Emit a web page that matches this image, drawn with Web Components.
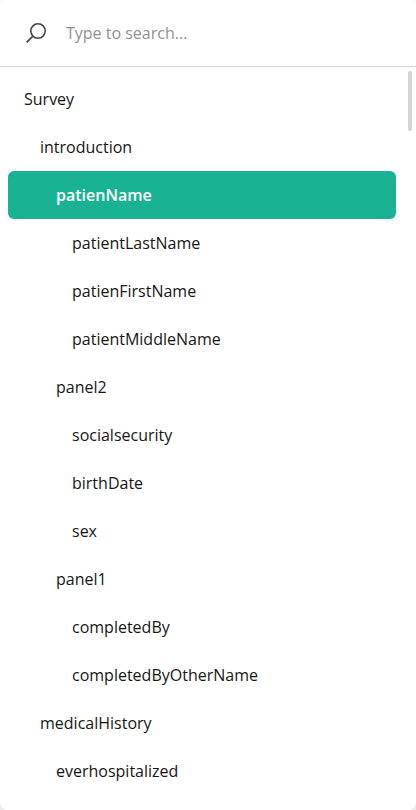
<!DOCTYPE html>
<html lang="en"><head><meta charset="utf-8"><title>Survey outline</title>
<style>html,body{margin:0;height:100%;overflow:hidden}body{background:linear-gradient(#f9f9f9,#ededed)}</style></head>
<body><survey-outline></survey-outline>
<script>
class OutlineSearch extends HTMLElement{constructor(){super();this.attachShadow({mode:'open'}).innerHTML=`<style>
:host{display:flex;align-items:center;box-sizing:border-box;height:67px;flex:none;border-bottom:1px solid #d4d4d4;padding:0 24px;gap:18px}
svg{display:block}span{color:#909090;line-height:24px}
</style><svg width="24" height="24" viewBox="0 0 24 24" fill="none" stroke="#444" stroke-width="1.6"><circle cx="14" cy="10" r="7.2"/><path d="M8.9 15.1L2.6 21.4"/></svg><span><slot></slot></span>`}}
customElements.define('outline-search',OutlineSearch);
class OutlineItem extends HTMLElement{constructor(){super();this.attachShadow({mode:'open'}).innerHTML=`<style>
:host{display:flex;align-items:center;height:48px;box-sizing:border-box;border-radius:6px;color:#161616;padding-left:calc(16px * var(--level,1))}
:host([selected]){background:#19b394;color:#fff;font-weight:600}
</style><slot></slot>`}
connectedCallback(){this.style.setProperty('--level',this.getAttribute('level'))}}
customElements.define('outline-item',OutlineItem);
class SurveyOutline extends HTMLElement{constructor(){super();const rows=[[1,'Survey'],[2,'introduction'],[3,'patienName'],[4,'patientLastName'],[4,'patienFirstName'],[4,'patientMiddleName'],[3,'panel2'],[4,'socialsecurity'],[4,'birthDate'],[4,'sex'],[3,'panel1'],[4,'completedBy'],[4,'completedByOtherName'],[2,'medicalHistory'],[3,'everhospitalized']];
this.attachShadow({mode:'open'}).innerHTML=`<style>
:host{display:flex;flex-direction:column;height:810px;background:#fff;border-radius:8px;overflow:hidden;font:16px/24px "Open Sans",sans-serif}
main{display:flex;flex:1;min-height:0}nav{flex:1;padding:8px 12px 0 8px}
i{width:4px;height:60px;background:#d4d4d4;border-radius:2px;margin:4px 4px 0 0}
</style><outline-search>Type to search...</outline-search><main><nav>${rows.map(([l,t])=>`<outline-item level="${l}"${t==='patienName'?' selected':''}>${t}</outline-item>`).join('')}</nav><i></i></main>`}}
customElements.define('survey-outline',SurveyOutline);
</script></body></html>
